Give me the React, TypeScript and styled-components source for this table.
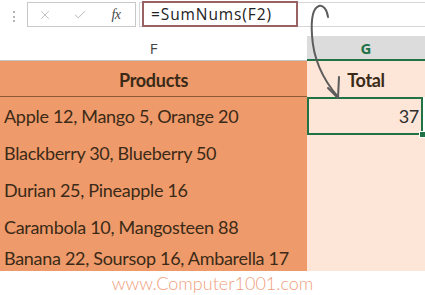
import React from "react";
import styled, { createGlobalStyle } from "styled-components";
import { X, Check } from "lucide-react";

const GlobalStyle = createGlobalStyle`
  html, body {
    margin: 0;
    padding: 0;
    background: #ffffff;
    overflow: hidden;
  }
`;

// sheet palette
const ORANGE = "#ee9a6b";
const PEACH = "#fde5d7";
const GREEN = "#217346";
const INK = "#3b2a17";

const Page = styled.div`
  position: relative;
  width: 425px;
  height: 295px;
  overflow: hidden;
  background: #ffffff;
  font-family: "Lato", "Liberation Sans", sans-serif;
`;

/* ---------- formula bar ---------- */

const FormulaBar = styled.div`
  display: flex;
  align-items: flex-start;
  height: 36px;
  padding-top: 2px;
  box-sizing: border-box;
`;

const Grip = styled.div`
  width: 27px;
  display: flex;
  flex-direction: column;
  align-items: center;
  gap: 2.5px;
  padding-top: 9px;
  box-sizing: border-box;

  span {
    width: 2px;
    height: 2px;
    background: #b4b4b4;
  }
`;

const ButtonBox = styled.div`
  width: 109px;
  height: 25px;
  border: 1px solid #c8c8c8;
  box-sizing: border-box;
  display: flex;
  align-items: center;
  color: #b3b3b3;
`;

const BarButton = styled.div<{ $w: number }>`
  width: ${(p) => p.$w}px;
  display: flex;
  justify-content: center;
  align-items: center;
`;

const Fx = styled.span`
  font-family: "Liberation Serif", serif;
  font-style: italic;
  font-size: 14px;
  color: #4a4a4a;
  letter-spacing: -0.5px;
`;

const InputField = styled.div`
  flex: 1;
  height: 25px;
  margin-left: 3px;
  border: 1px solid #d6d6d6;
  border-right: none;
  box-sizing: border-box;
  display: flex;
`;

const Highlight = styled.div`
  width: 156px;
  height: 26px;
  margin: -2px 0 0 2px;
  border: 2px solid #9a6262;
  box-sizing: border-box;
  padding-left: 7px;
  font-family: "Open Sans", "Liberation Sans", sans-serif;
  font-size: 15.5px;
  letter-spacing: 0.9px;
  line-height: 22px;
  color: #222;
`;

/* ---------- column headers ---------- */

const Grid = styled.div`
  display: grid;
  grid-template-columns: 307px 118px;
`;

const ColHead = styled.div<{ $active?: boolean }>`
  height: 25px;
  box-sizing: border-box;
  display: flex;
  align-items: center;
  justify-content: center;
  font-family: "Open Sans", "Liberation Sans", sans-serif;
  font-size: 15px;
  font-weight: ${(p) => (p.$active ? 700 : 400)};
  color: ${(p) => (p.$active ? GREEN : "#444")};
  background: ${(p) => (p.$active ? "#dcdcdc" : "#ffffff")};
  border-bottom: ${(p) => (p.$active ? `2px solid ${GREEN}` : "1px solid #c4c4c4")};
`;

/* ---------- cells ---------- */

const Cell = styled.div<{ $h: number; $top: number; $fill: string; $align?: string; $bold?: boolean; $rule?: boolean }>`
  height: ${(p) => p.$h}px;
  box-sizing: border-box;
  padding: ${(p) => p.$top}px 4px 0 4px;
  background: ${(p) => p.$fill};
  font-size: 18px;
  letter-spacing: -0.3px;
  line-height: 20px;
  white-space: nowrap;
  overflow: hidden;
  color: ${INK};
  text-align: ${(p) => p.$align || "left"};
  font-weight: ${(p) => (p.$bold ? 700 : 400)};
  border-bottom: ${(p) => (p.$rule ? "1px solid #8a5a38" : "none")};
`;

const SelectedCell = styled(Cell)`
  position: relative;
  overflow: visible;
  border: 2px solid ${GREEN};
  margin-right: 2px;
  padding-right: 2px;
  color: #2e2e2e;

  &::after {
    content: "";
    position: absolute;
    right: -5px;
    bottom: -5px;
    width: 5px;
    height: 5px;
    background: ${GREEN};
    border: 1px solid #fff;
  }
`;

const Watermark = styled.div`
  text-align: center;
  font-family: "Lato", "DejaVu Sans", sans-serif;
  font-weight: 300;
  font-size: 18px;
  color: #efa07d;
  padding-top: 1px;
`;

const ArrowLayer = styled.svg`
  position: absolute;
  left: 0;
  top: 0;
  pointer-events: none;
`;

const rows = [
  { text: "Blackberry 30, Blueberry 50", h: 37, top: 8 },
  { text: "Durian 25, Pineapple 16", h: 37, top: 8 },
  { text: "Carambola 10, Mangosteen 88", h: 37, top: 8 },
  { text: "Banana 22, Soursop 16, Ambarella 17", h: 25, top: 2 },
];

export default function App() {
  return (
    <Page>
      <GlobalStyle />
      <FormulaBar>
        <Grip>
          <span />
          <span />
          <span />
        </Grip>
        <ButtonBox>
          <BarButton $w={34}>
            <X size={14} strokeWidth={1.4} />
          </BarButton>
          <BarButton $w={36}>
            <Check size={14} strokeWidth={1.6} />
          </BarButton>
          <BarButton $w={36}>
            <Fx>fx</Fx>
          </BarButton>
        </ButtonBox>
        <InputField>
          <Highlight>=SumNums(F2)</Highlight>
        </InputField>
      </FormulaBar>

      <Grid>
        <ColHead>F</ColHead>
        <ColHead $active>G</ColHead>

        <Cell $h={36} $top={9} $fill={ORANGE} $align="center" $bold $rule>
          Products
        </Cell>
        <Cell $h={36} $top={9} $fill={PEACH} $align="center" $bold>
          Total
        </Cell>

        <Cell $h={38} $top={9} $fill={ORANGE}>
          Apple 12, Mango 5, Orange 20
        </Cell>
        <SelectedCell $h={38} $top={7} $fill={PEACH} $align="right">
          37
        </SelectedCell>

        {rows.map((r) => (
          <React.Fragment key={r.text}>
            <Cell $h={r.h} $top={r.top} $fill={ORANGE}>
              {r.text}
            </Cell>
            <Cell $h={r.h} $top={r.top} $fill={PEACH} />
          </React.Fragment>
        ))}
      </Grid>

      <Watermark>www.Computer1001.com</Watermark>

      {/* curved pointer from the formula down to the result cell */}
      <ArrowLayer width={425} height={295} viewBox="0 0 425 295">
        <g fill="none" stroke="#5c5c5c" strokeWidth={2} strokeLinecap="round" strokeLinejoin="round">
          <path d="M328,17 C327,9 323,5 319,6 C313,8 311,20 312,35 C313,55 320,76 338,97" />
          <path d="M328,88 L338,98 L339,77" />
        </g>
      </ArrowLayer>
    </Page>
  );
}
